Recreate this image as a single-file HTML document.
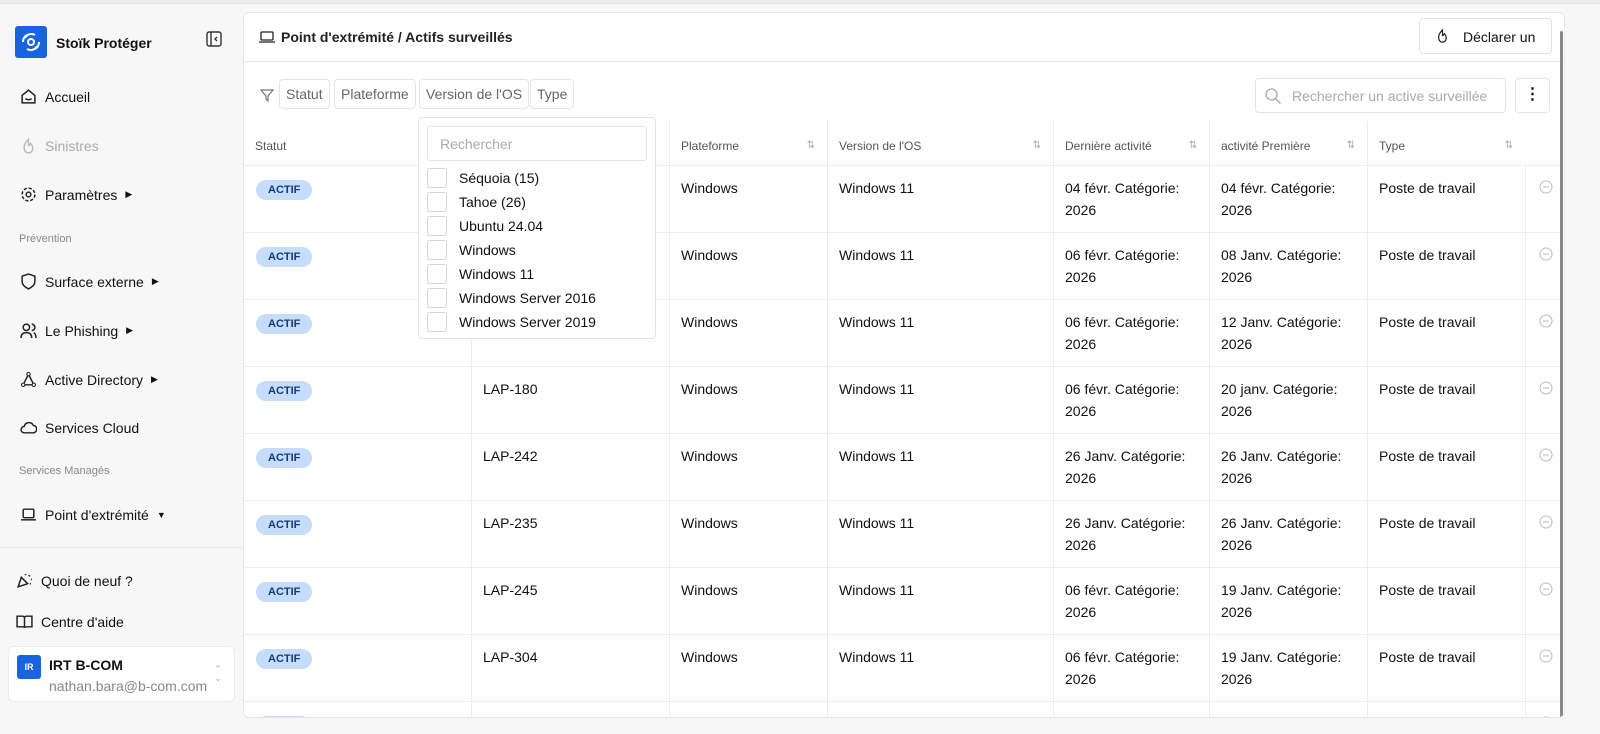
<!DOCTYPE html>
<html><head><meta charset="utf-8"><style>
*{box-sizing:border-box;margin:0;padding:0}
body{width:1600px;height:734px;overflow:hidden;background:#f7f7f8;font-family:"Liberation Sans",sans-serif;color:#111;position:relative}
.topline{position:absolute;left:0;top:0;width:1600px;height:4px;background:#ececee;border-bottom:1px solid #e2e2e4}
.side{position:absolute;left:0;top:4px;width:243px;height:730px}
.logo{position:absolute;left:15px;top:22px;width:32px;height:32px;background:#1a63e0;border-radius:3px}
.brand{position:absolute;left:56px;top:31px;font-size:14px;font-weight:bold}
.nav{position:absolute;left:20px;font-size:14px;display:flex;align-items:center;gap:8px}
.nav svg{width:17px;height:17px}
.sec{position:absolute;left:19px;font-size:11px;color:#888}
.main{position:absolute;left:243px;top:12px;width:1322px;height:706px;background:#fff;border:1px solid #e6e6e8;border-radius:6px;overflow:hidden}
.hdr{height:49px;border-bottom:1px solid #e6e6e8;position:relative}
.chip{position:absolute;top:66px;height:30px;border:1px solid #e4e4e6;border-radius:4px;font-size:14px;color:#666;padding:6px 6px}
.tbl{position:absolute;left:0;top:108px;width:1322px;height:600px}
.row{position:absolute;left:0;width:1322px;border-bottom:1px solid #ececee}
.c{position:absolute;top:0;height:100%;border-left:1px solid #ececee;font-size:14px;line-height:22px;padding:11px 11px}
.th{font-size:12px;color:#555;padding-top:14px}
.badge{position:absolute;left:12px;top:14px;height:20px;line-height:20px;background:#c6dcfb;color:#143a7a;font-size:11px;font-weight:bold;border-radius:10px;padding:0 12px}
.srt{position:absolute;right:12px;top:14px;font-size:10px;color:#aaa}
.dd{position:absolute;left:418px;top:117px;width:238px;height:222px;background:#fff;border:1px solid #e4e4e6;border-radius:4px;z-index:5}
.ddi{position:absolute;left:8px;font-size:14px;display:flex;align-items:center;gap:12px}
.cb{width:20px;height:20px;border:1px solid #d4d4d6;border-radius:3px}
</style></head><body>
<div class="topline"></div>
<div class="side">
<div class="logo"><svg viewBox="0 0 32 32" width="32" height="32"><circle cx="16" cy="16" r="3" fill="none" stroke="#fff" stroke-width="2"/><path d="M10 12a7 7 0 0 1 10-3M22 20a7 7 0 0 1-10 3M8 16a8 8 0 0 1 4-7M24 16a8 8 0 0 1-4 7" fill="none" stroke="#fff" stroke-width="2"/></svg></div>
<div class="brand">Stoïk Protéger</div>
<svg style="position:absolute;left:206px;top:27px" width="16" height="16" viewBox="0 0 16 16"><rect x="1" y="1" width="14" height="14" rx="2" fill="none" stroke="#333" stroke-width="1.4"/><path d="M5 1v14M11 6l-2 2 2 2" fill="none" stroke="#333" stroke-width="1.4"/></svg>
<div class="nav" style="top:84px"><svg viewBox="0 0 16 16"><path d="M2 7l6-5 6 5v7H2z" fill="none" stroke="#222" stroke-width="1.4"/><path d="M5 10q3 2 6 0" fill="none" stroke="#222" stroke-width="1.4"/></svg>Accueil</div>
<div class="nav" style="top:133px;color:#aaa"><svg viewBox="0 0 16 16"><path d="M8 2q-5 5-4 9a4 4 0 0 0 8 0q0-3-2-5-1 2-2 2z" fill="none" stroke="#bbb" stroke-width="1.4"/></svg>Sinistres</div>
<div class="nav" style="top:182px"><svg viewBox="0 0 16 16"><circle cx="8" cy="8" r="2.2" fill="none" stroke="#222" stroke-width="1.4"/><circle cx="8" cy="8" r="6" fill="none" stroke="#222" stroke-width="1.4" stroke-dasharray="3 1.7"/></svg>Paramètres <span style="font-size:9px">▶</span></div>
<div class="sec" style="top:229px">Prévention</div>
<div class="nav" style="top:269px"><svg viewBox="0 0 16 16"><path d="M8 1l6 2v5q0 4-6 7-6-3-6-7V3z" fill="none" stroke="#222" stroke-width="1.4"/></svg>Surface externe <span style="font-size:9px">▶</span></div>
<div class="nav" style="top:318px"><svg viewBox="0 0 16 16"><circle cx="6" cy="5" r="3" fill="none" stroke="#222" stroke-width="1.4"/><path d="M1 15q0-5 5-5t5 5M11 2a3 3 0 0 1 0 6M13 10q2 1 2 5" fill="none" stroke="#222" stroke-width="1.4"/></svg>Le Phishing <span style="font-size:9px">▶</span></div>
<div class="nav" style="top:367px"><svg viewBox="0 0 16 16"><path d="M8 3L3 13h10z" fill="none" stroke="#222" stroke-width="1.4"/><circle cx="8" cy="3" r="1.6" fill="#fff" stroke="#222"/><circle cx="3" cy="13" r="1.6" fill="#fff" stroke="#222"/><circle cx="13" cy="13" r="1.6" fill="#fff" stroke="#222"/></svg>Active Directory <span style="font-size:9px">▶</span></div>
<div class="nav" style="top:415px"><svg viewBox="0 0 16 16"><path d="M4 13a3 3 0 0 1 0-6 4.5 4.5 0 0 1 8.5-1A3.5 3.5 0 0 1 12 13z" fill="none" stroke="#222" stroke-width="1.4"/></svg>Services Cloud</div>
<div class="sec" style="top:461px">Services Managés</div>
<div class="nav" style="top:502px"><svg viewBox="0 0 16 16"><rect x="3" y="3" width="10" height="8" rx="1" fill="none" stroke="#222" stroke-width="1.4"/><path d="M1 13h14" stroke="#222" stroke-width="1.4"/></svg>Point d'extrémité <span style="font-size:9px">▼</span></div>
<div style="position:absolute;left:0;top:543px;width:243px;border-top:1px solid #e6e6e8"></div>
<div class="nav" style="top:568px;left:16px"><svg viewBox="0 0 16 16"><path d="M2 14l3-9 6 6z" fill="none" stroke="#222" stroke-width="1.4"/><path d="M9 2v1M12 4l1-1M14 7h1M13 11h1" stroke="#222" stroke-width="1.6"/></svg>Quoi de neuf ?</div>
<div class="nav" style="top:609px;left:16px"><svg viewBox="0 0 16 16"><path d="M1 3h5q2 0 2 2v9q0-1-2-1H1zM15 3h-5q-2 0-2 2v9q0-1 2-1h5z" fill="none" stroke="#222" stroke-width="1.4"/></svg>Centre d'aide</div>
<div style="position:absolute;left:8px;top:642px;width:227px;height:56px;background:#fff;border:1px solid #ececee;border-radius:6px">
<div style="position:absolute;left:8px;top:8px;width:24px;height:24px;background:#1a63e0;border-radius:3px;color:#fff;font-size:9px;font-weight:bold;text-align:center;line-height:24px">IR</div>
<div style="position:absolute;left:40px;top:10px;font-size:14px;font-weight:bold">IRT B-COM</div>
<div style="position:absolute;left:40px;top:31px;font-size:14px;color:#888">nathan.bara@b-com.com</div>
<div style="position:absolute;left:205px;top:18px;font-size:9px;color:#aaa;line-height:9px">⌃<br>⌄</div>
</div>
</div>
<div class="main">
<div class="hdr">
<svg style="position:absolute;left:15px;top:17px" width="16" height="14" viewBox="0 0 16 14"><rect x="2" y="2" width="12" height="8" rx="1" fill="none" stroke="#222" stroke-width="1.3"/><path d="M0 12h16" stroke="#222" stroke-width="1.3"/></svg>
<div style="position:absolute;left:37px;top:16px;font-size:14px;font-weight:bold;color:#222">Point d'extrémité / Actifs surveillés</div>
<div style="position:absolute;left:1175px;top:5px;width:133px;height:36px;border:1px solid #e4e4e6;border-radius:4px;font-size:14px;padding:10px 0 0 43px">Déclarer un
<svg style="position:absolute;left:15px;top:9px" width="15" height="17" viewBox="0 0 16 16"><path d="M8 1q-5 5-4 9a4 4 0 0 0 8 0q0-3-2-5-1 2-2 2z" fill="none" stroke="#222" stroke-width="1.3"/></svg></div>
</div>
<svg style="position:absolute;left:16px;top:75px" width="14" height="14" viewBox="0 0 14 14"><path d="M1 2h12L8 8v5L6 11V8z" fill="none" stroke="#777" stroke-width="1.2"/></svg>
<div class="chip" style="left:35px">Statut</div>
<div class="chip" style="left:90px">Plateforme</div>
<div class="chip" style="left:175px">Version de l'OS</div>
<div class="chip" style="left:286px">Type</div>
<div style="position:absolute;left:1011px;top:65px;width:251px;height:35px;border:1px solid #e4e4e6;border-radius:4px;font-size:14px;color:#aaa;padding:9px 0 0 36px">Rechercher un active surveillée
<svg style="position:absolute;left:8px;top:8px" width="18" height="18" viewBox="0 0 18 18"><circle cx="7.5" cy="7.5" r="5.5" fill="none" stroke="#aaa" stroke-width="1.3"/><path d="M11.5 11.5l5 5" stroke="#aaa" stroke-width="1.3"/></svg></div>
<div style="position:absolute;left:1271px;top:65px;width:35px;height:35px;border:1px solid #e4e4e6;border-radius:4px;text-align:center;font-weight:bold;font-size:16px;line-height:32px">⋮</div>
<div style="position:absolute;left:1316px;top:18px;width:3px;height:690px;background:#888;border-radius:2px;z-index:3"></div>
<div class="tbl" id="t"></div>
</div>
<div class="dd">
<div style="position:absolute;left:8px;top:8px;width:220px;height:35px;border:1px solid #e4e4e6;border-radius:3px;font-size:14px;color:#aaa;padding:9px 12px">Rechercher</div>
<div class="ddi" style="top:50px"><div class="cb"></div>Séquoia (15)</div>
<div class="ddi" style="top:74px"><div class="cb"></div>Tahoe (26)</div>
<div class="ddi" style="top:98px"><div class="cb"></div>Ubuntu 24.04</div>
<div class="ddi" style="top:122px"><div class="cb"></div>Windows</div>
<div class="ddi" style="top:146px"><div class="cb"></div>Windows 11</div>
<div class="ddi" style="top:170px"><div class="cb"></div>Windows Server 2016</div>
<div class="ddi" style="top:194px"><div class="cb"></div>Windows Server 2019</div>
</div>
<script>
(function(){
var cols=[0,227,425,583,809,965,1123,1281];
var t=document.getElementById('t'),h='';
h+='<div class="row" style="top:0px;height:45px">';
var hd=['Statut','','Plateforme',"Version de l'OS",'Dernière activité','activité Première','Type'];
for(var i=0;i<7;i++){h+='<div class="c th" style="left:'+cols[i]+'px;width:'+(cols[i+1]-cols[i])+'px;'+(i==0?'border-left:none':'')+'">'+hd[i]+(i>=2?'<span class="srt">⇅</span>':'')+'</div>';}
h+='</div>';
var d=[['','04 févr.','04 févr.'],['','06 févr.','08 Janv.'],['','06 févr.','12 Janv.'],['LAP-180','06 févr.','20 janv.'],['LAP-242','26 Janv.','26 Janv.'],['LAP-235','26 Janv.','26 Janv.'],['LAP-245','06 févr.','19 Janv.'],['LAP-304','06 févr.','19 Janv.'],['','','']];
for(var r=0;r<9;r++){var tp=45+r*67;h+='<div class="row" style="top:'+tp+'px;height:67px">';
h+='<div class="c" style="left:0;width:227px;border-left:none"><span class="badge">ACTIF</span></div>';
var v=[d[r][0],'Windows','Windows 11',d[r][1]+' Catégorie:<br>2026',d[r][2]+' Catégorie:<br>2026','Poste de travail'];
if(r==8)v=['','','','','',''];
for(var i=1;i<7;i++)h+='<div class="c" style="left:'+cols[i]+'px;width:'+(cols[i+1]-cols[i])+'px">'+v[i-1]+'</div>';
h+='<div class="c" style="left:1281px;width:40px"><svg style="position:absolute;left:13px;top:14px" width="14" height="14" viewBox="0 0 14 14"><circle cx="7" cy="7" r="6" fill="none" stroke="#bbb"/><path d="M4 7h6" stroke="#bbb"/></svg></div>';
h+='</div>';}
t.innerHTML=h;
})();
</script>
</body></html>
